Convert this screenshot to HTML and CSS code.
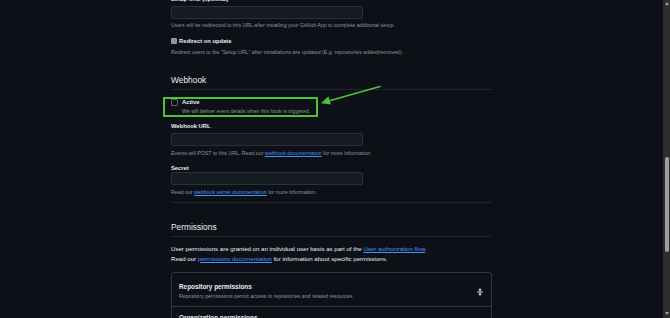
FILE: index.html
```html
<!DOCTYPE html>
<html lang="en">
<head>
<meta charset="utf-8">
<title>GitHub App settings</title>
<link rel="stylesheet" href="styles.css">
</head>
<body>
<main class="viewport">
  <div class="content">
    <div class="label">Setup URL (optional)</div>
    <div class="input input-first"></div>
    <p class="note note-tight">Users will be redirected to this URL after installing your GitHub App to complete additional setup.</p>

    <div class="check-row">
      <span class="checkbox checkbox-filled"></span>
      <span class="label">Redirect on update</span>
    </div>
    <p class="note note-tight">Redirect users to the "Setup URL" after installations are updated (E.g. repositories added/removed).</p>

    <h2 class="subhead subhead-webhook">Webhook</h2>

    <div class="highlight">
      <div class="active-row">
        <span class="checkbox"></span>
        <span class="label">Active</span>
      </div>
      <p class="note active-note">We will deliver event details when this hook is triggered.</p>
    </div>

    <div class="label label-url">Webhook URL</div>
    <div class="input input-url"></div>
    <p class="note">Events will POST to this URL. Read our <a class="link" href="#">webhook documentation</a> for more information.</p>

    <div class="label label-secret">Secret</div>
    <div class="input"></div>
    <p class="note">Read our <a class="link" href="#">webhook secret documentation</a> for more information.</p>

    <div class="divider"></div>

    <h2 class="subhead subhead-perm">Permissions</h2>
    <p class="para">User permissions are granted on an individual user basis as part of the <a class="link" href="#">User authorization flow</a>.<br>Read our <a class="link" href="#">permissions documentation</a> for information about specific permissions.</p>

    <div class="box">
      <div class="box-row box-row-first">
        <div class="box-text">
          <div class="box-title">Repository permissions</div>
          <div class="box-sub">Repository permissions permit access to repositories and related resources.</div>
        </div>
        <svg class="unfold" viewBox="0 0 8 10" width="6" height="8" aria-hidden="true">
          <path d="M4 0 L6.6 2.8 H1.4 Z" fill="#c9d1d9"/>
          <path d="M4 10 L6.6 7.2 H1.4 Z" fill="#c9d1d9"/>
          <rect x="3.3" y="2" width="1.4" height="6" fill="#c9d1d9"/>
          <rect x="0" y="4.4" width="8" height="1.2" fill="#c9d1d9"/>
        </svg>
      </div>
      <div class="box-row box-row-next">
        <div class="box-text">
          <div class="box-title">Organization permissions</div>
        </div>
      </div>
    </div>
  </div>

  <svg class="annotation" width="663" height="318" viewBox="0 0 663 318" aria-hidden="true">
    <line x1="380" y1="86.5" x2="328.5" y2="100.9" stroke="#4cc43a" stroke-width="1.6" stroke-linecap="round"/>
    <polygon points="321,103.2 328.4,96.6 330.9,104.6" fill="#4cc43a"/>
  </svg>
</main>
<div class="scrollbar">
  <span class="arrow-up"></span>
  <span class="thumb"></span>
  <span class="spacer"></span>
  <span class="arrow-down"></span>
</div>
</body>
</html>
```

FILE: styles.css
```css
html, body {
  margin: 0;
  padding: 0;
}

body {
  background: #0d1117;
  height: 318px;
  overflow: hidden;
  display: flex;
  font-family: "Liberation Sans", Arial, sans-serif;
  color: #e6edf3;
}

.viewport {
  flex: 1;
  position: relative;
  overflow: hidden;
}

.content {
  margin-top: -5px;
  margin-left: 171px;
  width: 321px;
}

.label {
  font-weight: 700;
  font-size: 5.8px;
  line-height: 8px;
  color: #e6edf3;
  white-space: nowrap;
}

.input {
  box-sizing: border-box;
  width: 192px;
  height: 13px;
  border: 1px solid #2b3138;
  border-radius: 2px;
  background: #151b23;
}

.input-first {
  margin-top: 3px;
}

.note {
  margin: 3px 0 0;
  font-size: 5.25px;
  line-height: 8px;
  color: #8b949e;
  white-space: nowrap;
}

.note-tight {
  margin-top: 2px;
}

.link {
  color: #4493f8;
  text-decoration: underline;
}

.check-row {
  margin-top: 7px;
  height: 10px;
  display: flex;
  align-items: center;
  gap: 2px;
}

.checkbox {
  box-sizing: border-box;
  width: 6px;
  height: 6px;
  border: 1px solid #6e7681;
  border-radius: 1px;
  background: #0d1117;
  flex: none;
}

.checkbox-filled {
  background: #8c9096;
  border-color: #9a9ea4;
}

.subhead {
  margin: 18px 0 0;
  padding-bottom: 3px;
  border-bottom: 1px solid #21262d;
  font-size: 8.4px;
  line-height: 12px;
  font-weight: 400;
  color: #e6edf3;
}

.highlight {
  box-sizing: border-box;
  margin-top: 7px;
  margin-left: -8px;
  width: 155px;
  height: 20px;
  border: 2px solid #4cc43a;
  padding: 0 0 0 6px;
}

.active-row {
  height: 6px;
  display: flex;
  align-items: center;
  gap: 4px;
}

.active-row .checkbox {
  width: 7px;
  height: 7px;
  border-color: #5a626c;
}

.active-note {
  margin-top: 3px;
  margin-left: 11px;
  line-height: 7px;
  font-size: 5.2px;
}

.label-url {
  margin-top: 5px;
}

.input-url {
  margin-top: 3px;
}

.label-secret {
  margin-top: 7px;
}

.divider {
  margin-top: 6px;
  border-top: 1px solid #21262d;
}

.para {
  margin: 7px 0 0;
  font-size: 6.1px;
  line-height: 9.5px;
  color: #e6edf3;
  white-space: nowrap;
}

.box {
  margin-top: 9px;
  border: 1px solid #30363d;
  border-radius: 3px;
}

.box-row {
  display: flex;
  align-items: center;
  justify-content: space-between;
  padding: 10px 8px 6px 7px;
}

.box-row-first {
  border-bottom: 1px solid #30363d;
}

.box-row-next {
  padding-top: 7px;
}

.box-title {
  font-weight: 700;
  font-size: 6.4px;
  line-height: 8px;
  color: #e6edf3;
  white-space: nowrap;
}

.box-sub {
  margin-top: 2px;
  font-size: 5.2px;
  line-height: 7px;
  color: #8b949e;
  white-space: nowrap;
}

.unfold {
  display: block;
  flex: none;
}

.annotation {
  position: absolute;
  top: 0;
  left: 0;
  pointer-events: none;
}

.scrollbar {
  width: 7px;
  flex: none;
  background: #2e2e2e;
  display: flex;
  flex-direction: column;
  align-items: center;
}

.arrow-up {
  margin-top: 2px;
  width: 0;
  height: 0;
  border-left: 2.5px solid transparent;
  border-right: 2.5px solid transparent;
  border-bottom: 3px solid #a3a3a3;
}

.thumb {
  margin-top: 152px;
  width: 4px;
  height: 95px;
  border-radius: 2px;
  background: #9e9e9e;
}

.spacer {
  flex: 1;
}

.arrow-down {
  margin-bottom: 3px;
  width: 0;
  height: 0;
  border-left: 2.5px solid transparent;
  border-right: 2.5px solid transparent;
  border-top: 3px solid #a3a3a3;
}
```
